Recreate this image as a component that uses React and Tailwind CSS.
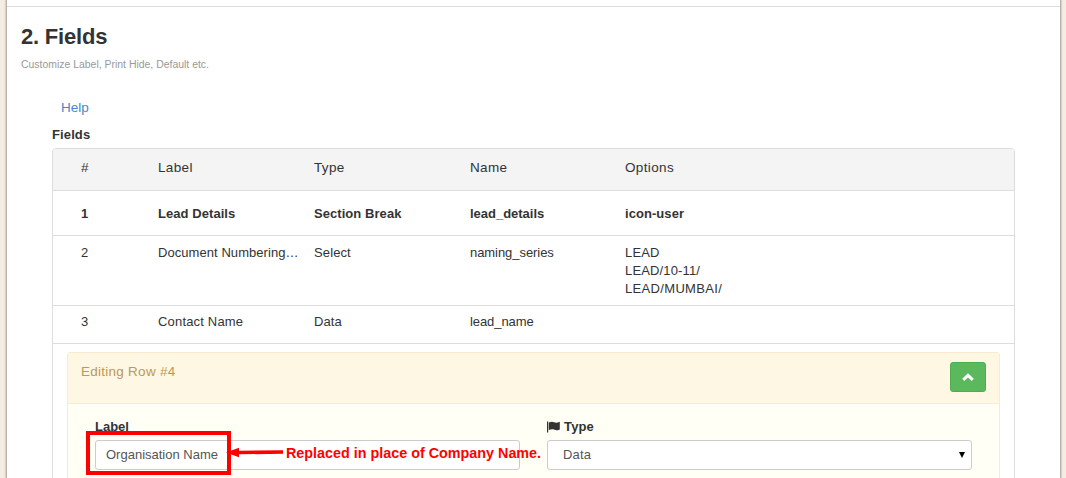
import React from "react";

const columns = "grid grid-cols-[77px_156px_156px_155px_1fr] pl-7";

function Row({ className, cells }) {
  return (
    <div className={`${columns} border-b border-[#dddddd] leading-[18px] ${className}`}>
      {cells.map((cell, i) => (
        <div key={i} className="whitespace-pre">
          {cell}
        </div>
      ))}
    </div>
  );
}

function EditPanel() {
  return (
    <section className="ml-[14px] mr-[14px] mt-2 h-[200px] rounded-[3px] border border-[#faebcc] bg-[#fffff6]">
      <header className="flex h-[51px] justify-between border-b border-[#faebcc] bg-[#fdf7e3] pl-[13px] pr-[13px] pt-[9px]">
        <span className="text-[13.5px] leading-5 tracking-[0.26px] text-[#c09853]">Editing Row #4</span>
        <button className="flex h-[30px] w-9 items-center justify-center rounded-[3px] border border-[#4cae4c] bg-[#5cb85c]">
          <svg width="12" height="8" viewBox="0 0 12 8" className="mb-px" fill="none" stroke="white" strokeWidth="3">
            <path d="M1.2 6.9 6 2.3l4.8 4.6" />
          </svg>
        </button>
      </header>
      <div className="flex gap-[27px] pl-[27px] pt-[14px]">
        <div className="w-[425px]">
          <div className="h-[22px] font-bold leading-[18px]">Label</div>
          <div className="relative flex h-[30px] items-center rounded-[3px] border border-[#cccccc] bg-white pl-[10px] text-[#555555]">
            <span>Organisation Name</span>
            <div className="absolute -left-[10px] -top-[10px] h-11 w-[145px] border-4 border-[#ff0000]" />
            <svg className="absolute left-[129px] top-[5px]" width="60" height="16" viewBox="0 0 60 16">
              <path d="M1 6.4 14 1.7v3L58 4.2v3.6L14 8.3v3z" fill="#ff0000" />
            </svg>
            <div className="absolute left-[190px] top-[3px] whitespace-nowrap text-[14.35px] font-bold leading-[18px] text-[#ff0000]">
              Replaced in place of Company Name.
            </div>
          </div>
        </div>
        <div className="w-[425px]">
          <div className="flex h-[22px] gap-1 font-bold leading-[18px] tracking-[0.15px]">
            <svg width="13" height="12" viewBox="0 0 13 12" className="mt-[3px]" fill="#333333">
              <path d="M0 .5h1.2V11.5H0zM1.8 1.6C4 .5 5.6.4 7 1.2c1.7.8 3.3.6 5.8-.4v7.6C10.3 9.5 8.7 9.5 7 8.6 5.4 7.8 4 8.1 1.8 9.1z" />
            </svg>
            <span>Type</span>
          </div>
          <div className="flex h-[30px] items-center justify-between rounded-[3px] border border-[#cccccc] bg-white pl-[15px] pr-[6px] tracking-[0.2px] text-[#555555]">
            <span>Data</span>
            <svg width="6" height="6" viewBox="0 0 6 6">
              <path d="M0 0h6L3 6z" fill="#000000" />
            </svg>
          </div>
        </div>
      </div>
    </section>
  );
}

export default function App() {
  return (
    <div className="h-[478px] overflow-hidden bg-[#f5ede4] pl-[7px] pr-[6px] font-['Liberation_Sans',Arial,sans-serif] text-[13px] text-[#333333]">
      <main className="h-full bg-white shadow-[0_0_2px_1px_#a09890]">
        <div className="h-[7px] border-b border-[#dddddd]" />
        <div className="pl-[14px] pt-[17px]">
          <h1 className="text-[22px] font-bold leading-[26px] tracking-[-0.2px]">2. Fields</h1>
          <p className="mt-2 text-[10.45px] leading-[14px] text-[#999999]">Customize Label, Print Hide, Default etc.</p>
        </div>
        <div className="ml-[45px] mr-[45px] mt-[27px]">
          <div className="pl-[9px] text-[13.5px] leading-[18px] text-[#428bca]">Help</div>
          <div className="mt-[9px] font-bold leading-[18px] tracking-[0.12px]">Fields</div>
          <div className="mt-1 h-[400px] rounded-[4px] border border-[#dddddd]">
            <Row className="h-[42px] rounded-t-[3px] bg-[#f4f4f4] pt-[10px] text-[13.5px] tracking-[0.36px]" cells={["#", "Label", "Type", "Name", "Options"]} />
            <Row className="h-[45px] pt-[14px] font-bold tracking-[0.06px]" cells={["1", "Lead Details", "Section Break", <span className="tracking-[-0.02px]">lead_details</span>, "icon-user"]} />
            <Row
              className="h-[70px] pt-2"
              cells={[
                "2",
                <span className="tracking-[0.06px]">Document Numbering…</span>,
                <span className="tracking-[0.12px]">Select</span>,
                <span className="tracking-[-0.06px]">naming_series</span>,
                <span>
                  <span className="tracking-[0.15px]">{"LEAD\nLEAD/10-11/\n"}</span>
                  <span className="tracking-[0.33px]">LEAD/MUMBAI/</span>
                </span>,
              ]}
            />
            <Row
              className="h-[38px] pt-[7px]"
              cells={[
                "3",
                <span className="tracking-[0.18px]">Contact Name</span>,
                <span className="tracking-[0.12px]">Data</span>,
                <span className="tracking-[-0.08px]">lead_name</span>,
                "",
              ]}
            />
            <EditPanel />
          </div>
        </div>
      </main>
    </div>
  );
}
